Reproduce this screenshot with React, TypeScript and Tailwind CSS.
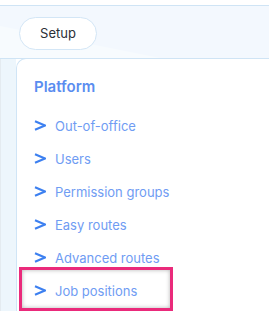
const items = [
  "Out-of-office",
  "Users",
  "Permission groups",
  "Easy routes",
  "Advanced routes",
  "Job positions",
];

function Chevron() {
  return (
    <svg width="12" height="11" viewBox="0 0 12 11" className="shrink-0">
      <polyline
        points="1,1.2 11,5.5 1,9.8"
        fill="none"
        stroke="#3d80f0"
        strokeWidth="2.1"
        strokeLinejoin="miter"
      />
    </svg>
  );
}

export default function App() {
  return (
    <div className="relative h-[311px] w-[269px] overflow-hidden bg-white font-['Inter',sans-serif]">
      <div className="h-[5px] bg-white" />

      {/* top setup bar */}
      <div className="relative h-[54px] overflow-hidden border-y border-[#cfe4f5] bg-[#f3f8fe] px-[19px] pt-[11px]">
        <svg
          className="absolute left-0 top-0"
          width="269"
          height="54"
          viewBox="0 0 269 54"
        >
          <polygon points="0,20 160,52 0,52" fill="#f7fbfe" />
        </svg>
        <button className="relative flex h-[33px] w-[78px] items-center justify-center rounded-full border border-[#d3e6f6] bg-white text-[13px] text-[#2b2f36]">
          Setup
        </button>
      </div>

      <div className="-mt-px flex h-[260px]">
        <div className="w-[16px] shrink-0 border-l border-[#e4ebf0] bg-[#edf6fc]" />
        <div className="flex-1 rounded-tl-[10px] border-l border-t border-[#d0e5f6] bg-white pl-[17px] pt-[18px]">
          <div className="text-[15px] font-semibold leading-[20px] text-[#5a8df0]">
            Platform
          </div>
          <ul className="mt-[12px] flex flex-col">
            {items.map((item) => (
              <li key={item} className="flex h-[33px] items-center gap-[9px]">
                <Chevron />
                <span className="text-[13px] leading-[18px] text-[#6f9cf3]">
                  {item}
                </span>
              </li>
            ))}
          </ul>
        </div>
      </div>

      {/* highlight annotation */}
      <div className="absolute left-[19px] top-[267px] h-[44px] w-[154px] border-[3px] border-[#ea2a7b] shadow-[inset_0_0_4px_rgba(0,0,0,0.3)]" />
    </div>
  );
}
